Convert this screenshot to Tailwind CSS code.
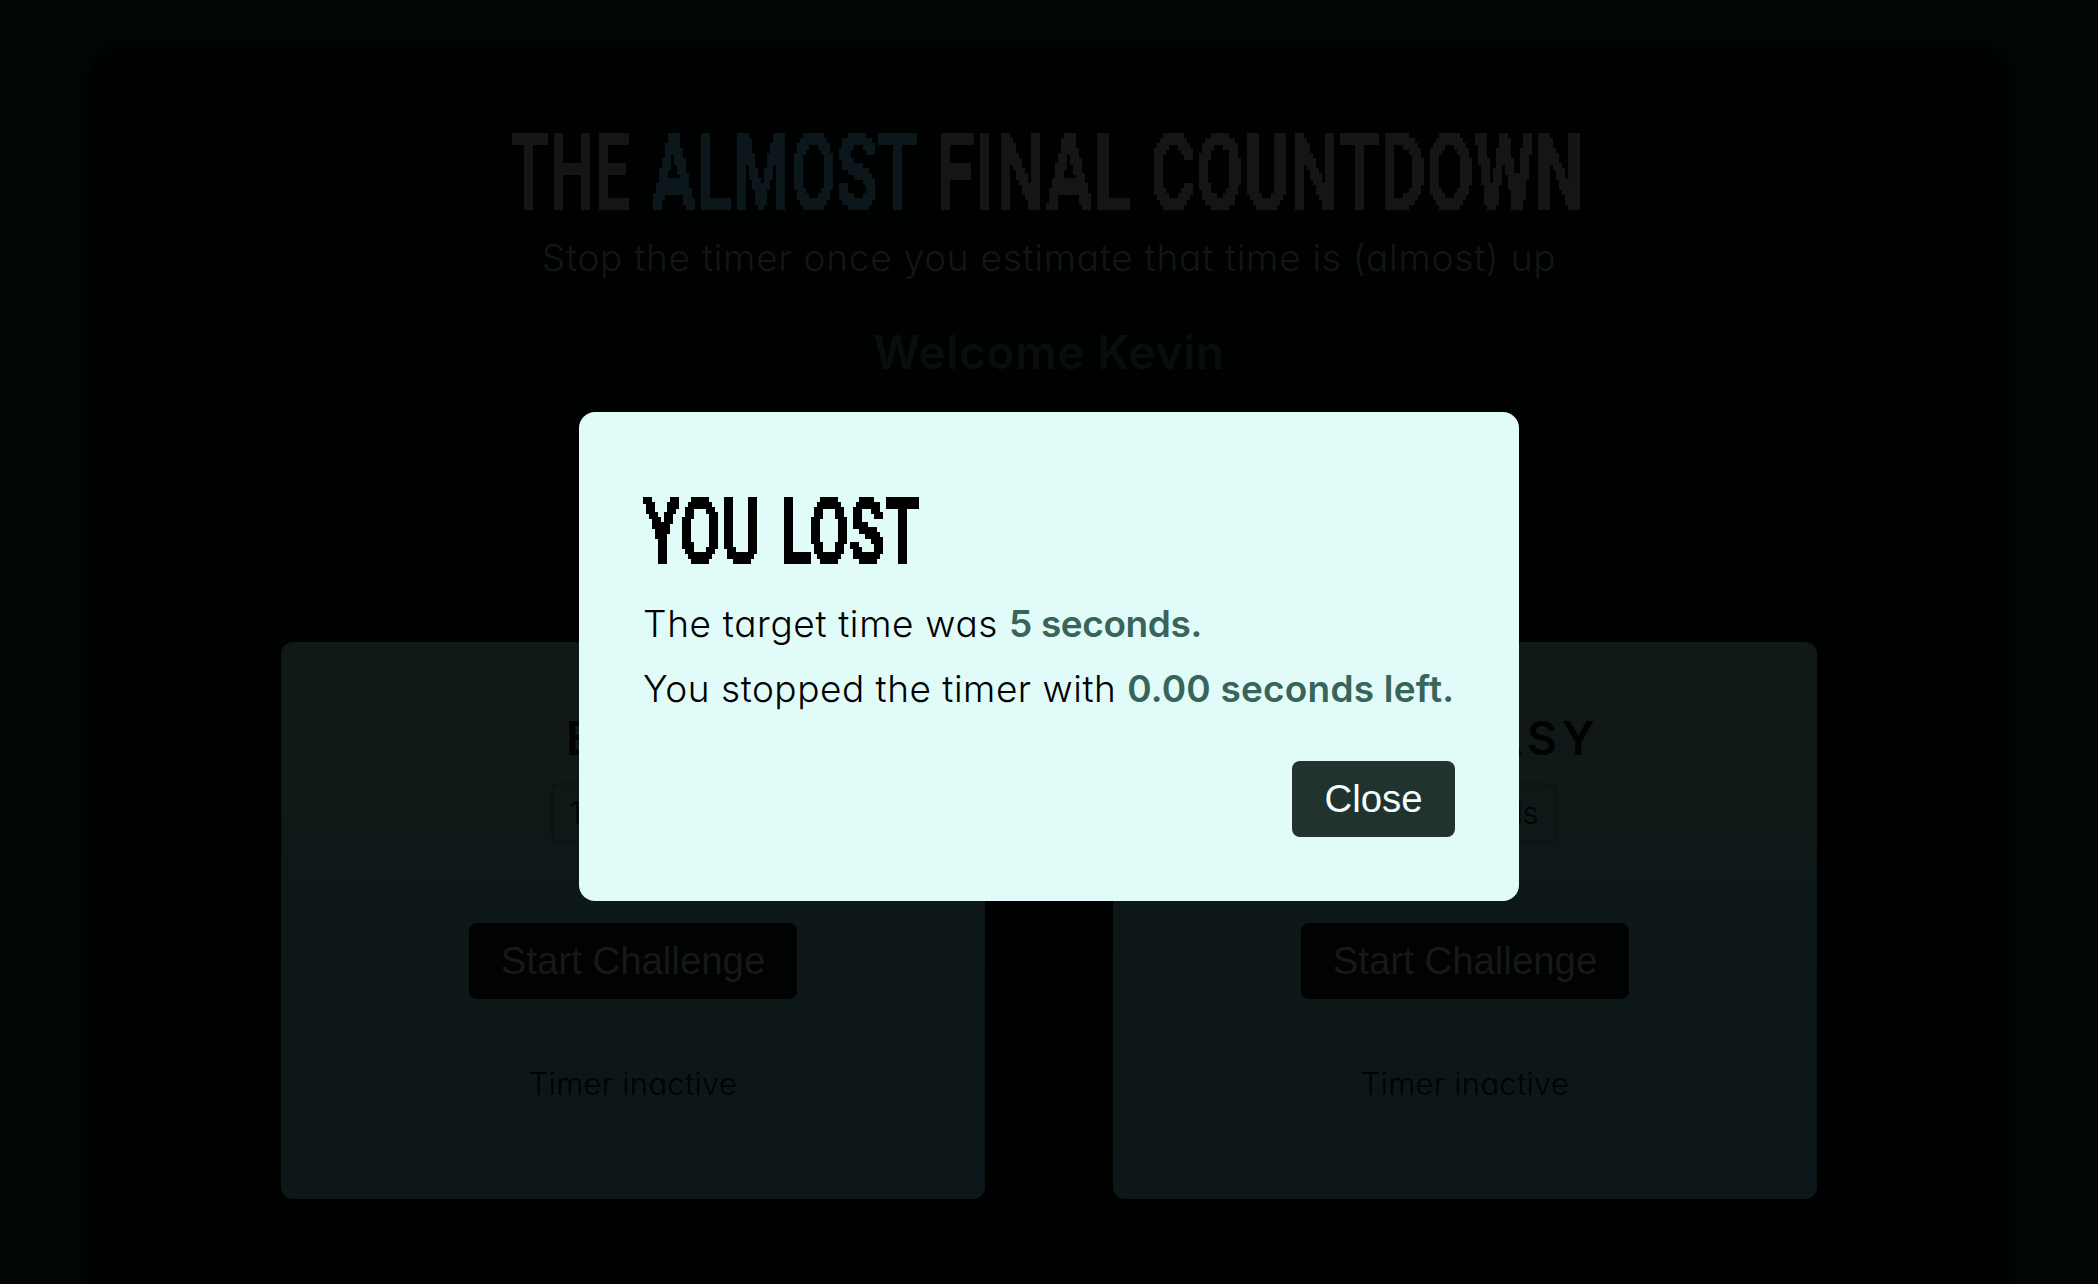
<!DOCTYPE html>
<html lang="en">
<head>
<meta charset="utf-8">
<title>The Almost Final Countdown</title>
<script src="https://cdn.jsdelivr.net/npm/@tailwindcss/browser@4"></script>
</head>
<body class="h-screen overflow-hidden bg-[#010506] font-[Inter,sans-serif] font-light [font-feature-settings:'cv11']">
<!-- pixelating filter shared by the display headings: sample one dot per 3x5 cell, then grow it -->
<svg class="absolute size-0" aria-hidden="true">
  <filter id="pixel" filterUnits="userSpaceOnUse" x="0" y="0" width="1400" height="100" color-interpolation-filters="sRGB">
    <feFlood x="1" y="2" width="1" height="1" flood-color="#000" result="dot"/>
    <feOffset in="dot" x="0" y="0" width="3" height="5" result="cell"/>
    <feTile in="cell" result="grid"/>
    <feComposite in="SourceGraphic" in2="grid" operator="in"/>
    <feMorphology operator="dilate" radius="1 3"/>
    <feComponentTransfer><feFuncA type="discrete" tableValues="0 1"/></feComponentTransfer>
  </filter>
</svg>

<main class="mx-[90px] mt-12 flex h-[1300px] flex-col items-center rounded-[32px] bg-[radial-gradient(circle_at_50%_60%,#000201,#000101_50%,#000102_80%)] pt-[71px] shadow-[0_0_5px_#000202]">
  <h1 class="h-[101px]">
    <svg class="block" width="1080" height="100" font-family="Roboto, sans-serif" font-size="105.5" font-weight="700" fill="#141615">
      <g filter="url(#pixel)">
        <text x="1" y="90" textLength="121" lengthAdjust="spacingAndGlyphs">THE</text>
        <text x="142" y="90" textLength="268" lengthAdjust="spacingAndGlyphs" fill="#0b171b">ALMOST</text>
        <text x="427" y="90" textLength="195" lengthAdjust="spacingAndGlyphs">FINAL</text>
        <text x="641" y="90" textLength="434" lengthAdjust="spacingAndGlyphs">COUNTDOWN</text>
      </g>
    </svg>
  </h1>
  <p class="mt-[14px] text-[37px] leading-[48px] tracking-[0.75px] text-[#141616]">Stop the timer once you estimate that time is (almost) up</p>
  <h2 class="mt-10 text-[46px] leading-[60px] font-semibold tracking-[0.65px] text-[#090e0d]">Welcome Kevin</h2>

  <div class="mt-[260px] flex shrink-0 gap-32">
    <section class="flex h-[557px] w-[704px] shrink-0 flex-col items-center rounded-xl bg-linear-to-b from-[#101917] to-[#0d1618] pt-[66px] text-[#010202]">
      <h2 class="ml-2 text-[46px] leading-[60px] font-semibold tracking-[4.6px]">EASY</h2>
      <p class="mt-[15px] flex h-[60px] w-[165px] items-center justify-center rounded-lg border-2 border-[#0c1413] text-[31px]">1 second</p>
      <button class="mt-20 h-[76px] w-[328px] rounded-lg bg-[#010202] font-['Liberation_Sans',sans-serif] text-[38.4px] font-normal text-[#171818]">Start Challenge</button>
      <p class="mt-[61px] text-[31px] leading-[48px] tracking-[0.3px]">Timer inactive</p>
    </section>
    <section class="flex h-[557px] w-[704px] shrink-0 flex-col items-center rounded-xl bg-linear-to-b from-[#101917] to-[#0d1618] pt-[66px] text-[#010202]">
      <h2 class="-ml-1 text-[46px] leading-[60px] font-semibold tracking-[4.8px]">NOT EASY</h2>
      <p class="mt-[15px] flex h-[60px] w-[184px] items-center justify-center rounded-lg border-2 border-[#0c1413] text-[31px] tracking-[-0.4px]">5 seconds</p>
      <button class="mt-20 h-[76px] w-[328px] rounded-lg bg-[#010202] font-['Liberation_Sans',sans-serif] text-[38.4px] font-normal text-[#171818]">Start Challenge</button>
      <p class="mt-[61px] text-[31px] leading-[48px] tracking-[0.3px]">Timer inactive</p>
    </section>
  </div>
</main>

<div role="dialog" class="absolute top-[412px] left-[579px] flex h-[489px] w-[940px] flex-col rounded-2xl bg-[#e0fbf8] p-16 text-black">
  <h2 class="h-[100px] pt-0.5">
    <svg class="block" width="400" height="98" font-family="Roboto, sans-serif" font-size="91.4" font-weight="700">
      <g filter="url(#pixel)">
        <text x="0" y="85" textLength="118" lengthAdjust="spacingAndGlyphs">YOU</text>
        <text x="137" y="85" textLength="140" lengthAdjust="spacingAndGlyphs">LOST</text>
      </g>
    </svg>
  </h2>
  <p class="mt-6 text-[37px] leading-[48px] tracking-[0.65px] whitespace-nowrap">The target time was <strong class="font-semibold tracking-[-0.4px] text-[#38645a]">5 seconds.</strong></p>
  <p class="mt-[17px] text-[37px] leading-[48px] tracking-[0.52px] whitespace-nowrap">You stopped the timer with <strong class="font-semibold tracking-[0.2px] text-[#38645a]">0.00 seconds left.</strong></p>
  <button class="mt-12 h-[76px] w-[163px] self-end rounded-lg bg-[#20332e] font-['Liberation_Sans',sans-serif] text-[38.4px] font-normal text-[#f3fdfb]">Close</button>
</div>
</body>
</html>
